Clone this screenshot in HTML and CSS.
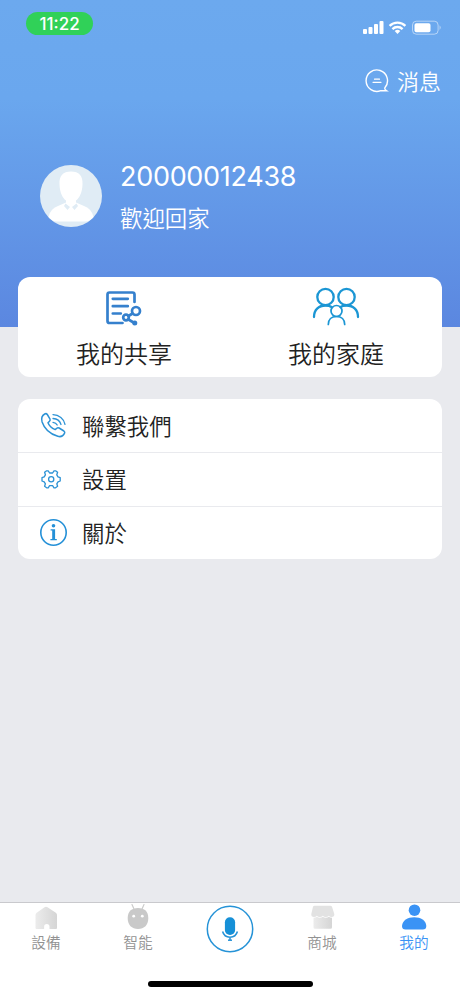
FILE: index.html
```html
<!doctype html>
<html lang="zh-Hant">
  <head>
    <meta charset="utf-8"/>
    <title>我的</title>
    <link rel="stylesheet" href="styles.css">
  </head>
  <body>
    <div class="page">
      <header class="hero">
        <div class="status-bar">
          <div class="clock">11:22</div>
          <svg class="status-icons" width="80" height="16" viewBox="0 0 80 16">
            <g fill="#fff">
              <rect x="1" y="9" width="4" height="5" rx="1"/>
              <rect x="6.5" y="7" width="4" height="7" rx="1"/>
              <rect x="12" y="4" width="4" height="10" rx="1"/>
              <rect x="17.5" y="1" width="4" height="13" rx="1"/>
              <path d="M35.5 14l-2.8-2.9a4 4 0 0 1 5.6 0z"/>
            </g>
            <g fill="none" stroke="#fff" stroke-width="2.3">
              <path d="M27.6 5.9a11.3 11.3 0 0 1 15.8 0"/>
              <path d="M30.4 9.1a7.3 7.3 0 0 1 10.2 0"/>
            </g>
            <rect x="50.5" y="1.2" width="25.6" height="13" rx="3.8" fill="none" stroke="#fff" stroke-opacity=".5"/>
            <rect x="52.5" y="3.2" width="16" height="9" rx="1.8" fill="#fff"/>
            <path d="M77.6 5.3q2 2.3 0 4.6z" fill="#fff" fill-opacity=".6"/>
          </svg>
        </div>
        <div class="messages">
          <svg width="24" height="24" viewBox="0 0 24 24" fill="none" stroke="#fff" stroke-width="1.4" stroke-linecap="round">
            <path d="M15.8 21.600A10.700 10.700 0 1 1 20.200 18.300q-1.300 1.600 1.500 3.500h-5.200"/>
            <path d="M9.500 10.200h5M8 13.300h8" stroke-width="1.2"/>
          </svg>
          <span>消息</span>
        </div>
        <div class="profile">
          <svg class="avatar" width="62" height="62" viewBox="0 0 62 62">
            <circle cx="31" cy="31" r="31" fill="#e0ecf5"/>
            <path d="M8.5 52q1.5-8 9.5-11l8-3.500h10l8 3.500q8 3 9.500 11-4 4.500-8 4.500h-29q-4 0-8-4.500z" fill="#fff"/>
            <path d="M31 6.500c-8 0-12 4-11.500 13 .3 8 3 13.500 6.500 16v3l5 4 5-4v-3c3.500-2.500 6.200-8 6.500-16 .5-9-3.500-13-11.500-13z" fill="#fff"/>
            <path d="M25.500 38.500L24 41l3.500 4 2.500-3zM36.500 38.500L38 41l-3.500 4-2.500-3z" fill="#e0ecf5"/>
          </svg>
          <div>
            <div class="account">20000012438</div>
            <div class="welcome">歡迎回家</div>
          </div>
        </div>
      </header>

      <main>
        <section class="card shortcuts">
          <div class="shortcut">
            <svg width="48" height="40" viewBox="0 0 48 40" fill="none" stroke="#3580cd" stroke-width="2.7" stroke-linecap="round">
              <path d="M34.500 15V7.500q0-2-2-2H9.500q-2 0-2 2v26.500q0 2 2 2H22.500"/>
              <path d="M12.800 11.800h15M12.800 19.200h15M12.800 26.500h8"/>
              <circle cx="36" cy="24" r="4"/>
              <circle cx="26" cy="30.500" r="2.800"/>
              <path d="M28.500 29l4-2.500M28.500 32.500l5 3"/>
              <circle cx="34.800" cy="36" r="1.500" fill="#3580cd" stroke-width="2"/>
            </svg>
            <span>我的共享</span>
          </div>
          <div class="shortcut">
            <svg width="48" height="40" viewBox="0 0 48 40" fill="none" stroke="#1b96d4" stroke-width="2.3" stroke-linecap="round">
              <circle cx="13.500" cy="10" r="8.200"/>
              <circle cx="34.500" cy="10" r="8.200"/>
              <path d="M2 30c0-7 4.500-11.500 11.500-11.500q4 0 6 1.500M46 30c0-7-4.500-11.500-11.500-11.500q-4 0-6 1.500"/>
              <g stroke-width="1.700">
                <circle cx="24.500" cy="24" r="5.500"/>
                <path d="M16.300 37.500c0-5 3.200-8 8.200-8s8.200 3 8.200 8"/>
              </g>
            </svg>
            <span>我的家庭</span>
          </div>
        </section>

        <section class="card menu">
          <div class="menu-item">
            <svg width="30" height="30" viewBox="0 0 30 30" fill="none" stroke="#2c92d5" stroke-width="1.500" stroke-linecap="round" stroke-linejoin="round">
              <path d="M9.300 3.500l2.600 4.300q.7 1.300-.4 2.400l-1.500 1.600c1.200 3.200 4 5.500 7.200 6.800l1.600-1.400q1-.9 2.300-.2l4.800 3q1.400 1 .6 2.400c-1.300 2.600-3.700 3.800-6.700 2.900C12 23 6.200 17.300 4.100 11c-.9-3.200-.4-6.300 2.600-8q1.600-.9 2.600.5z"/>
              <g stroke-width="1.300">
                <path d="M15 3.600c6 .2 11 4.200 12 9.700M15 7.500c4 .2 7 2.600 8 6M15 11.300c2.200.2 3.500 1.200 4.200 2.700"/>
              </g>
            </svg>
            <span>聯繫我們</span>
          </div>
          <div class="menu-item">
            <svg width="30" height="30" viewBox="0 0 30 30" fill="none" stroke="#2c92d5" stroke-width="1.300" stroke-linejoin="round">
              <g transform="translate(0 .5)">
                <path d="M8.600 6.300h1.600l1.400 2.200h3l1.400-2.200h1.600l2 1.500-.8 2.500 1.200 2 2.200.8v3.400l-2.200.8-1.200 2 .8 2.500-2 1.500H16l-1.400-2.200h-3l-1.400 2.200H8.600l-2-1.500.8-2.500-1.200-2-2.200-.8v-3.400l2.200-.8 1.200-2-.8-2.500z"/>
                <circle cx="13.200" cy="14.800" r="2.600"/>
              </g>
            </svg>
            <span>設置</span>
          </div>
          <div class="menu-item">
            <svg width="30" height="30" viewBox="0 0 30 30">
              <circle cx="15.500" cy="14.500" r="12.700" fill="none" stroke="#2490d7" stroke-width="1.600"/>
              <circle cx="15.500" cy="7.700" r="1.800" fill="#2490d7"/>
              <path d="M12.600 11.300h4.500v9.600h1.700v1.300h-6.400v-1.300h1.800v-8.300h-1.600z" fill="#2490d7"/>
            </svg>
            <span>關於</span>
          </div>
        </section>
      </main>

      <nav class="tab-bar">
        <div class="tab">
          <svg width="28" height="28" viewBox="0 0 28 28">
            <defs>
              <linearGradient id="grey" x1="0" y1="0" x2="1" y2="0">
                <stop offset="0" stop-color="#ececec"/>
                <stop offset="1" stop-color="#d5d5d5"/>
              </linearGradient>
            </defs>
            <path d="M12.500 4.200q1.500-1 3 0l8.300 5.500q1.200 1 1.200 2.300V25q0 1-1 1h-6.500v-2.300q0-2.700-2.700-2.700t-2.700 2.700V26H4.500q-1 0-1-1V12q0-1.300 1.200-2.300z" fill="url(#grey)"/>
          </svg>
          <span>設備</span>
        </div>
        <div class="tab">
          <svg width="28" height="28" viewBox="0 0 28 28">
            <path d="M8 1.500l2 4.500M20 1.500l-2 4.500" stroke="#ccc" stroke-width="1.200" stroke-linecap="round"/>
            <path d="M14 5c6.500 0 10.300 3.500 10.300 10 0 7-4 11-10.300 11S3.700 22 3.700 15C3.700 8.500 7.500 5 14 5z" fill="#c9c9c9"/>
            <circle cx="9.700" cy="13.200" r="1.400" fill="#fff"/>
            <circle cx="18.300" cy="13.200" r="1.400" fill="#fff"/>
          </svg>
          <span>智能</span>
        </div>
        <div class="tab">
          <svg class="mic" width="48" height="48" viewBox="0 0 48 48">
            <circle cx="24" cy="24" r="22.700" fill="none" stroke="#2693d7" stroke-width="1.500"/>
            <rect x="18.900" y="12.300" width="10.200" height="17.700" rx="5" fill="#1690d7"/>
            <path d="M16.600 26.500c1 3.800 3.800 5.700 7.400 5.700s6.400-1.900 7.400-5.700M24 32v3" fill="none" stroke="#2693d7" stroke-width="1.500"/>
            <path d="M22 35.200h4" stroke="#2693d7" stroke-width="1.500"/>
          </svg>
        </div>
        <div class="tab">
          <svg width="28" height="28" viewBox="0 0 28 28">
            <path d="M6.500 2.800h16q1 0 1.500 1l2.300 7.200q.3 3-2.700 3-2 0-2.800-1.200-1 1.200-3 1.200t-3-1.200q-1 1.200-3 1.200t-3-1.200q-1 1.200-2.800 1.200-3 0-2.700-3L5 3.800q.5-1 1.500-1z" fill="#e2e2e2"/>
            <path d="M5.500 14.800q2 0 3.300-1 1.200 1 3 1t3-1q1.200 1 3 1t3-1q1.300 1 3.200 1v9.500q0 1.500-1.500 1.500H7q-1.500 0-1.500-1.500z" fill="url(#grey)"/>
          </svg>
          <span>商城</span>
        </div>
        <div class="tab active">
          <svg width="28" height="28" viewBox="0 0 28 28" fill="#3a93f5">
            <circle cx="14.500" cy="7.200" r="5.800"/>
            <path d="M2 23C2.500 17.500 7.500 14.200 14.200 14.200S26 17.500 26.300 23q0 3.500-3.500 3.500H5.500Q2 26.500 2 23z"/>
          </svg>
          <span>我的</span>
        </div>
      </nav>
      <div class="home-indicator"></div>
    </div>
  </body>
</html>
```
FILE: styles.css
```css
* {
  box-sizing: border-box;
}
body {
  margin: 0;
  font-family: "Noto Sans CJK TC", sans-serif;
  font-weight: 350;
}
svg {
  display: block;
  flex: none;
}
.page {
  display: flex;
  flex-direction: column;
  height: 996px;
  background: #e9eaee;
}
.hero {
  height: 327px;
  flex: none;
  color: #fff;
  background: linear-gradient(#6ca9ee 0, #6aa7ee 30%, #5b87e0 100%);
}
.status-bar {
  display: flex;
  justify-content: space-between;
  align-items: flex-start;
  padding: 12px 18px 0 26px;
  height: 66px;
}
.clock {
  width: 67px;
  height: 23px;
  border-radius: 12px;
  background: #30d158;
  font: 500 17px/24px Inter, sans-serif;
  text-align: center;
}
.status-icons {
  margin-top: 8px;
}
.messages {
  display: flex;
  justify-content: flex-end;
  align-items: center;
  gap: 8px;
  height: 30px;
  padding-right: 19px;
  font-size: 22px;
  line-height: 30px;
}
.messages span {
  margin-top: -2px;
}
.profile {
  display: flex;
  align-items: center;
  gap: 18px;
  margin-top: 60px;
  padding-left: 40px;
  height: 80px;
}
.account {
  margin-top: 3px;
  font: 400 27px/38px Inter, sans-serif;
  letter-spacing: -0.3px;
}
.welcome {
  font-size: 22.4px;
  line-height: 42px;
}
main {
  flex: 1;
  margin-top: -50px;
  padding: 0 18px;
}
.card {
  border-radius: 12px;
  background: #fff;
  color: #222;
}
.shortcuts {
  display: grid;
  grid-template-columns: 1fr 1fr;
  height: 100px;
}
.shortcut {
  display: flex;
  flex-direction: column;
  align-items: center;
  padding-top: 10px;
  font-size: 24px;
}
.shortcut span {
  line-height: 52px;
}
.menu {
  margin-top: 22px;
}
.menu-item {
  display: flex;
  align-items: center;
  gap: 14px;
  height: 53.3px;
  padding-left: 20px;
  font-size: 22.4px;
}
.menu-item span {
  margin-top: -2px;
}
.menu-item + .menu-item {
  border-top: 1px solid #e9eaee;
}
.tab-bar {
  display: grid;
  grid-template-columns: repeat(5, 1fr);
  height: 70px;
  border-top: 1px solid #c9c9cd;
  background: #fff;
}
.tab {
  display: flex;
  flex-direction: column;
  align-items: center;
  font-size: 14.7px;
  line-height: 22px;
  color: #929292;
}
.tab.active {
  color: #3a93f5;
}
.mic {
  margin-top: 2px;
}
.home-indicator {
  height: 24px;
  background: #fff;
}
.home-indicator::before {
  content: "";
  display: block;
  width: 165px;
  height: 6px;
  margin: 9px auto 0;
  border-radius: 3px;
  background: #000;
}
```
